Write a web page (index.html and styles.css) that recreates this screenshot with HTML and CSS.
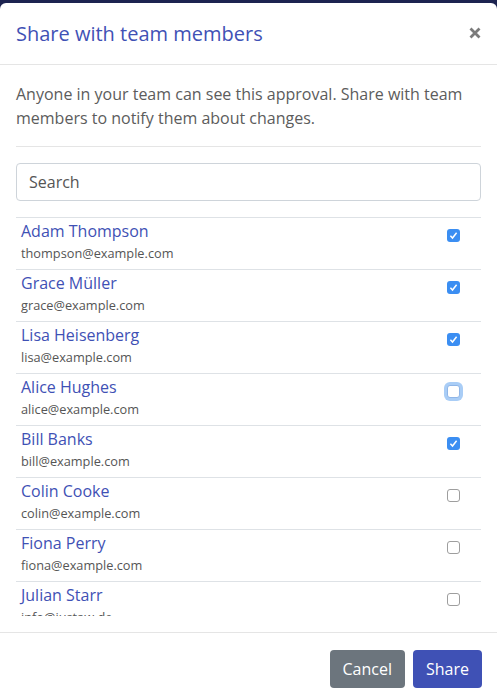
FILE: index.html
```html
<!DOCTYPE html>
<html>
<head>
<meta charset="utf-8">
<link rel="stylesheet" href="styles.css">
</head>
<body>
<div class="modal">
  <div class="header">
    <h1 class="title">Share with team members</h1>
    <span class="close" aria-label="Close">
      <svg width="12" height="12" viewBox="0 0 12 12"><path d="M1.5 1.5 L10.5 10.5 M10.5 1.5 L1.5 10.5" stroke="#7b7b7b" stroke-width="2.8" stroke-linecap="butt"/></svg>
    </span>
  </div>
  <div class="body">
    <p class="desc">Anyone in your team can see this approval. Share with team members to notify them about changes.</p>
    <div class="rule"></div>
    <div class="search">Search</div>
    <div class="list">
      <div class="row"><div class="info"><div class="name">Adam Thompson</div><div class="email">thompson@example.com</div></div><span class="cb checked"><svg viewBox="0 0 13 13" width="13" height="13"><path d="M3.4 6.8 L5.5 9 L9.6 3.8" fill="none" stroke="#fff" stroke-width="1.5"/></svg></span></div>
      <div class="row"><div class="info"><div class="name">Grace Müller</div><div class="email">grace@example.com</div></div><span class="cb checked"><svg viewBox="0 0 13 13" width="13" height="13"><path d="M3.4 6.8 L5.5 9 L9.6 3.8" fill="none" stroke="#fff" stroke-width="1.5"/></svg></span></div>
      <div class="row"><div class="info"><div class="name">Lisa Heisenberg</div><div class="email">lisa@example.com</div></div><span class="cb checked"><svg viewBox="0 0 13 13" width="13" height="13"><path d="M3.4 6.8 L5.5 9 L9.6 3.8" fill="none" stroke="#fff" stroke-width="1.5"/></svg></span></div>
      <div class="row"><div class="info"><div class="name">Alice Hughes</div><div class="email">alice@example.com</div></div><span class="cb focus"></span></div>
      <div class="row"><div class="info"><div class="name">Bill Banks</div><div class="email">bill@example.com</div></div><span class="cb checked"><svg viewBox="0 0 13 13" width="13" height="13"><path d="M3.4 6.8 L5.5 9 L9.6 3.8" fill="none" stroke="#fff" stroke-width="1.5"/></svg></span></div>
      <div class="row"><div class="info"><div class="name">Colin Cooke</div><div class="email">colin@example.com</div></div><span class="cb"></span></div>
      <div class="row"><div class="info"><div class="name">Fiona Perry</div><div class="email">fiona@example.com</div></div><span class="cb"></span></div>
      <div class="row"><div class="info"><div class="name">Julian Starr</div><div class="email">info@justaw.de</div></div><span class="cb"></span></div>
    </div>
  </div>
  <div class="footer">
    <button class="btn btn-cancel">Cancel</button>
    <button class="btn btn-share">Share</button>
  </div>
</div>
</body>
</html>
```
FILE: styles.css
```css
html, body {
  margin: 0;
  padding: 0;
  height: 100%;
  overflow: hidden;
}
body {
  background: #1c2350;
  font-family: "Open Sans", "DejaVu Sans", sans-serif;
}
.modal {
  margin-top: 3px;
  height: 697px;
  background: #fff;
  border-radius: 6px 6px 0 0;
  display: flex;
  flex-direction: column;
}
.header {
  height: 61px;
  border-bottom: 1px solid #e5e5e5;
  display: flex;
  align-items: center;
  justify-content: space-between;
  padding: 0 16px;
}
.title {
  margin: 0;
  font-size: 20px;
  font-weight: 400;
  color: #3f51b5;
  line-height: 28px;
}
.close {
  display: flex;
  margin-top: -2px;
}
.body {
  padding: 17px 16px 16px;
}
.desc {
  margin: 0;
  font-size: 16px;
  line-height: 24px;
  color: #5c5c5c;
}
.rule {
  height: 1px;
  background: #e5e5e5;
  margin: 16px 0;
}
.search {
  height: 36px;
  border: 1px solid #ced4da;
  border-radius: 4px;
  padding: 0 12px;
  font-size: 16px;
  line-height: 36px;
  color: #555;
  margin-bottom: 16px;
}
.list {
  height: 399px;
  overflow: hidden;
}
.row {
  border-top: 1px solid #dee2e6;
  height: 51px;
  display: flex;
  justify-content: space-between;
  align-items: flex-start;
  padding: 0 21px 0 5px;
}
.info {
  padding-top: 1px;
}
.name {
  font-size: 16px;
  line-height: 24px;
  color: #3f51b5;
}
.email {
  font-size: 12.75px;
  line-height: 20px;
  color: #555;
}
.cb {
  box-sizing: border-box;
  width: 13px;
  height: 13px;
  margin-top: 11px;
  border: 1px solid #9e9e9e;
  border-radius: 3px;
  background: #fff;
  display: block;
}
.cb svg {
  display: block;
}
.cb.checked {
  border: none;
  background: #3b8ef2;
}
.cb.focus {
  border-color: #8fb6e8;
  box-shadow: 0 0 0 3px #a9cdf6;
}
.footer {
  border-top: 1px solid #e5e5e5;
  padding: 17px 15px 0;
  display: flex;
  justify-content: flex-end;
  gap: 8px;
}
.btn {
  font-family: "Open Sans", "DejaVu Sans", sans-serif;
  font-size: 16px;
  line-height: 24px;
  padding: 7px 13px;
  border: none;
  border-radius: 4px;
  color: #fff;
  height: 38px;
}
.btn-cancel {
  background: #6c757d;
}
.btn-share {
  background: #3f51b5;
}
```
